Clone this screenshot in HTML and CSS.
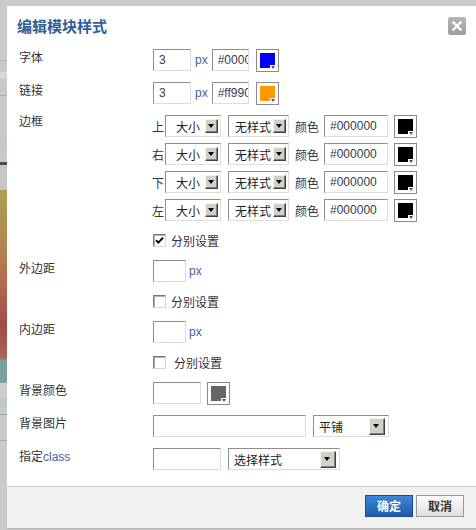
FILE: index.html
```html
<!DOCTYPE html>
<html lang="zh-CN">
<head>
<meta charset="utf-8">
<title>编辑模块样式</title>
<link rel="stylesheet" href="styles.css">
</head>
<body>
<div class="page">
  <div class="backdrop"></div>
  <div class="dialog">
    <div class="dlg-head">
      <h1 class="dlg-title">编辑模块样式</h1>
      <span class="dlg-close" title="关闭">
        <svg width="10" height="10" viewBox="0 0 10 10"><path d="M1.5 1.5 L8.5 8.5 M8.5 1.5 L1.5 8.5" stroke="#fff" stroke-width="2.4" stroke-linecap="square"/></svg>
      </span>
    </div>

    <div class="dlg-body">
      <div class="row">
        <div class="label">字体</div>
        <div class="ctrls">
          <input class="inp w38" type="text" value="3">
          <span class="unit">px</span>
          <input class="inp w37" type="text" value="#0000ff">
          <span class="cbtn gap7"><span class="sw sw-blue"></span><i class="tri"></i></span>
        </div>
      </div>

      <div class="row">
        <div class="label">链接</div>
        <div class="ctrls">
          <input class="inp w38" type="text" value="3">
          <span class="unit">px</span>
          <input class="inp w37" type="text" value="#ff9900">
          <span class="cbtn gap7"><span class="sw sw-orange"></span><i class="tri"></i></span>
        </div>
      </div>

      <div class="row">
        <div class="label up">边框</div>
        <div class="border-rows">
          <div class="brow">
            <span class="side">上</span>
            <span class="sel s-size"><span class="txt">大小</span><i class="dd"></i></span>
            <span class="sel s-style"><span class="txt">无样式</span><i class="dd"></i></span>
            <span class="clab">颜色</span>
            <input class="inp w64" type="text" value="#000000">
            <span class="cbtn gap6"><span class="sw sw-black"></span><i class="tri"></i></span>
          </div>
          <div class="brow">
            <span class="side">右</span>
            <span class="sel s-size"><span class="txt">大小</span><i class="dd"></i></span>
            <span class="sel s-style"><span class="txt">无样式</span><i class="dd"></i></span>
            <span class="clab">颜色</span>
            <input class="inp w64" type="text" value="#000000">
            <span class="cbtn gap6"><span class="sw sw-black"></span><i class="tri"></i></span>
          </div>
          <div class="brow">
            <span class="side">下</span>
            <span class="sel s-size"><span class="txt">大小</span><i class="dd"></i></span>
            <span class="sel s-style"><span class="txt">无样式</span><i class="dd"></i></span>
            <span class="clab">颜色</span>
            <input class="inp w64" type="text" value="#000000">
            <span class="cbtn gap6"><span class="sw sw-black"></span><i class="tri"></i></span>
          </div>
          <div class="brow">
            <span class="side">左</span>
            <span class="sel s-size"><span class="txt">大小</span><i class="dd"></i></span>
            <span class="sel s-style"><span class="txt">无样式</span><i class="dd"></i></span>
            <span class="clab">颜色</span>
            <input class="inp w64" type="text" value="#000000">
            <span class="cbtn gap6"><span class="sw sw-black"></span><i class="tri"></i></span>
          </div>
        </div>
      </div>

      <div class="row check">
        <div class="ctrls">
          <span class="cb checked"><svg width="9" height="9" viewBox="0 0 9 9"><path d="M1 4.2 L3.4 6.6 L8 1.6" fill="none" stroke="#000" stroke-width="2"/></svg></span>
          <span class="cb-text">分别设置</span>
        </div>
      </div>

      <div class="row">
        <div class="label">外边距</div>
        <div class="ctrls">
          <input class="inp w33" type="text" value="">
          <span class="unit tight">px</span>
        </div>
      </div>

      <div class="row check">
        <div class="ctrls">
          <span class="cb"></span>
          <span class="cb-text">分别设置</span>
        </div>
      </div>

      <div class="row">
        <div class="label">内边距</div>
        <div class="ctrls">
          <input class="inp w33" type="text" value="">
          <span class="unit tight">px</span>
        </div>
      </div>

      <div class="row check">
        <div class="ctrls">
          <span class="cb"></span>
          <span class="cb-text wide">分别设置</span>
        </div>
      </div>

      <div class="row">
        <div class="label">背景颜色</div>
        <div class="ctrls">
          <input class="inp w48" type="text" value="">
          <span class="cbtn gap6"><span class="sw sw-gray"></span><i class="tri"></i></span>
        </div>
      </div>

      <div class="row">
        <div class="label">背景图片</div>
        <div class="ctrls">
          <input class="inp w153" type="text" value="">
          <span class="sel big s-repeat"><span class="txt">平铺</span><i class="dd"></i></span>
        </div>
      </div>

      <div class="row">
        <div class="label">指定<span class="latin">class</span></div>
        <div class="ctrls">
          <input class="inp w68" type="text" value="">
          <span class="sel big s-class"><span class="txt">选择样式</span><i class="dd"></i></span>
        </div>
      </div>
    </div>

    <div class="dlg-foot">
      <button class="btn btn-ok" type="button">确定</button>
      <button class="btn btn-cancel" type="button">取消</button>
    </div>
  </div>
</div>
</body>
</html>
```

FILE: styles.css
```css
* { box-sizing: border-box; }

html, body {
  margin: 0;
  padding: 0;
}

body {
  width: 476px;
  height: 530px;
  overflow: hidden;
  background: #cbcbcb;
  font-family: "Liberation Sans", "Noto Sans CJK SC", sans-serif;
  font-size: 12px;
  color: #333;
}

.page {
  display: flex;
  height: 530px;
}

/* the page visible behind the dialog */
.backdrop {
  width: 7px;
  flex: none;
  background: linear-gradient(to bottom,
    #cbcbcb 0 60px,
    #b4b4b4 60px 61px,
    #c9c9c9 61px 72px,
    #d9d9d9 72px 78px,
    #c9c9c9 78px 95px,
    #adadad 95px 96px,
    #c9c9c9 96px 138px,
    #b9cdb9 138px 146px,
    #c9c9c9 146px 162px,
    #4e4a40 162px 165px,
    #c6c6c6 165px 190px,
    #aaa050 190px,
    #b38a52 235px,
    #b46a50 285px,
    #a24a48 325px,
    #ad6652 358px,
    #7c9fa0 360px 383px,
    #cdcdcd 383px 398px,
    #b8ccb8 398px 407px,
    #cacaca 407px 414px,
    #a0a0a0 414px 415px,
    #cacaca 415px 440px,
    #a8a8a8 440px 441px,
    #cacaca 441px 530px);
}

.dialog {
  flex: 1;
  margin-top: 6px;
  height: 523px;
  background: #fff;
  display: flex;
  flex-direction: column;
  border-bottom: 1px solid #b4b4b4;
}

/* header */
.dlg-head {
  height: 43px;
  flex: none;
  display: flex;
  justify-content: space-between;
  align-items: flex-start;
  padding: 10px 10px 0 10px;
}

.dlg-title {
  margin: 0;
  font-family: "Noto Sans CJK SC", sans-serif;
  font-size: 15px;
  line-height: 20px;
  font-weight: bold;
  color: #2f5f96;
}

.dlg-close {
  width: 18px;
  height: 18px;
  margin-top: 1px;
  border-radius: 2px;
  background: linear-gradient(#b6b6b6, #9d9d9d);
  display: flex;
  align-items: center;
  justify-content: center;
}

.dlg-close svg { display: block; }

/* body */
.dlg-body {
  display: flex;
  flex-direction: column;
  gap: 11px;
  padding-left: 12px;
}

.row {
  display: grid;
  grid-template-columns: 134px 1fr;
  align-items: start;
}

.label {
  line-height: 16px;
  font-family: "Noto Sans CJK SC", sans-serif;
  color: #333;
  white-space: nowrap;
}

.label.up { margin-top: -2px; }

.label .latin {
  font-family: "Liberation Sans", sans-serif;
  color: #45639a;
}

.ctrls {
  display: flex;
  align-items: center;
  height: 22px;
}

.row.check .ctrls {
  grid-column: 2;
  height: 17px;
}

/* text inputs */
.inp {
  flex: none;
  height: 22px;
  margin: 0;
  padding: 0 0 0 5px;
  border: 1px solid;
  border-color: #8e8e8e #dddddd #dddddd #8e8e8e;
  background: #fff;
  font-family: "Liberation Sans", sans-serif;
  font-size: 12px;
  color: #3a3a4a;
  outline: none;
}

.w33 { width: 33px; }
.w37 { width: 37px; }
.w38 { width: 38px; }
.w48 { width: 48px; }
.w64 { width: 64px; }
.w68 { width: 68px; }
.w153 { width: 153px; }

.unit {
  margin: 0 4px;
  color: #45639a;
  font-size: 12px;
}

.unit.tight { margin: 0 0 0 3px; }

/* colour picker buttons */
.cbtn {
  position: relative;
  flex: none;
  width: 23px;
  height: 23px;
  padding: 3px;
  border: 1px solid #8a8a8a;
  background: #fff;
}

.cbtn.gap7 { margin-left: 7px; }
.cbtn.gap6 { margin-left: 6px; }

.sw {
  display: block;
  width: 15px;
  height: 15px;
}

.sw-blue { background: #0000ff; }
.sw-orange { background: #ff9900; }
.sw-black { background: #000; }
.sw-gray { background: #666; }

.tri {
  position: absolute;
  right: 1px;
  bottom: 1px;
  width: 7px;
  height: 5px;
  background: #fff;
}

.tri::after {
  content: "";
  position: absolute;
  left: 1px;
  top: 1px;
  border-left: 2.5px solid transparent;
  border-right: 2.5px solid transparent;
  border-top: 3px solid #555;
}

/* border rows */
.border-rows {
  display: flex;
  flex-direction: column;
  gap: 6px;
}

.brow {
  display: flex;
  align-items: center;
  height: 22px;
  margin-left: -1px;
}

.side {
  width: 12px;
  margin-right: 0;
  font-family: "Noto Sans CJK SC", sans-serif;
}

.clab {
  margin: 0 5px 0 6px;
  font-family: "Noto Sans CJK SC", sans-serif;
}

/* fake select boxes */
.sel {
  flex: none;
  display: flex;
  align-items: center;
  height: 22px;
  padding: 0 2px 0 5px;
  border: 1px solid;
  border-color: #8e8e8e #dddddd #dddddd #8e8e8e;
  background: #fff;
  font-family: "Noto Sans CJK SC", sans-serif;
  color: #222;
}

.sel .txt {
  flex: 1;
  white-space: nowrap;
}

.sel .dd {
  position: relative;
  flex: none;
  width: 13px;
  height: 14px;
  background: #d4d0c8;
  border: 1px solid;
  border-color: #f4f4f4 #404040 #404040 #f4f4f4;
  box-shadow: inset -1px -1px 0 #808080;
}

.sel .dd::after {
  content: "";
  position: absolute;
  left: 50%;
  top: 50%;
  margin: -2px 0 0 -4px;
  border-left: 3.5px solid transparent;
  border-right: 3.5px solid transparent;
  border-top: 4px solid #000;
}

.sel.big { padding-right: 3px; }

.sel.big .dd {
  width: 16px;
  height: 17px;
}

.s-size {
  width: 56px;
  margin-left: 1px;
}

.s-size .txt { text-align: center; }

.s-style {
  width: 61px;
  margin-left: 7px;
  padding-left: 4px;
}

.s-style .txt { text-align: center; }

.s-repeat {
  width: 76px;
  margin-left: 7px;
}

.s-class {
  width: 112px;
  margin-left: 7px;
}

/* checkboxes */
.cb {
  flex: none;
  width: 13px;
  height: 13px;
  border: 1px solid;
  border-color: #7a7a7a #d8d6d0 #d8d6d0 #7a7a7a;
  box-shadow: inset 1px 1px 0 #b0b0b0;
  background: #fff;
  display: flex;
  align-items: center;
  justify-content: center;
}

.cb svg { display: block; }

.cb-text {
  margin-left: 5px;
  font-family: "Noto Sans CJK SC", sans-serif;
}

.cb-text.wide { margin-left: 8px; }

/* footer */
.dlg-foot {
  margin-top: auto;
  height: 42px;
  flex: none;
  border-top: 1px solid #c9c9c9;
  background: #f1f1f1;
  display: flex;
  justify-content: flex-end;
  align-items: flex-start;
  gap: 3px;
  padding: 8px 12px 0 0;
}

.btn {
  width: 48px;
  height: 22px;
  margin: 0;
  padding: 0;
  font-family: "Noto Sans CJK SC", sans-serif;
  font-size: 12px;
  font-weight: bold;
  line-height: 20px;
  cursor: pointer;
}

.btn-ok {
  border: 1px solid #1b4f95;
  background: linear-gradient(#3e86d8, #1f5cab);
  color: #fff;
}

.btn-cancel {
  border: 1px solid #9a9a9a;
  background: linear-gradient(#fefefe, #dedede);
  color: #333;
}
```
